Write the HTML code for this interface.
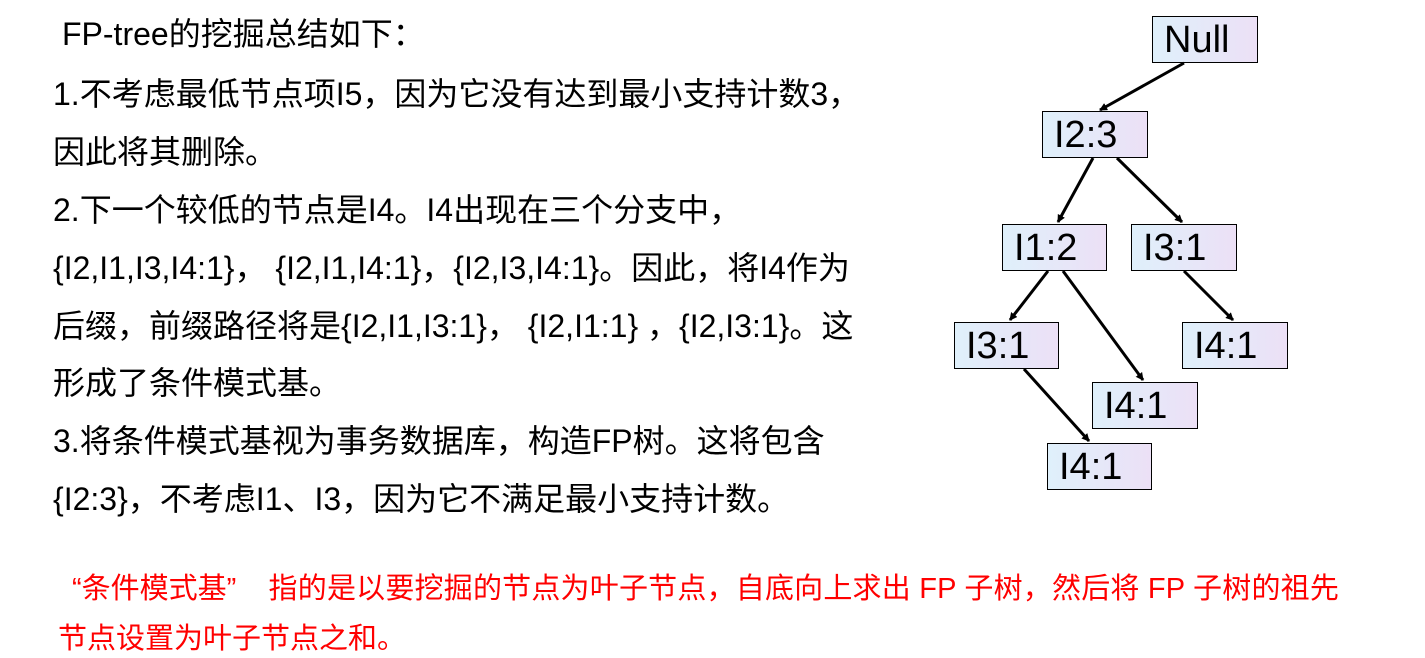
<!DOCTYPE html>
<html><head><meta charset="utf-8"><style>
body{margin:0;width:1425px;height:658px;background:#fff;position:relative;overflow:hidden;font-family:"Liberation Sans","Noto Sans CJK SC",sans-serif}
.l{position:absolute;left:53px;font-size:32px;color:#000;white-space:nowrap;line-height:38px}
.r{position:absolute;left:58px;font-size:29px;color:#f00;white-space:nowrap;line-height:34px}
.b{position:absolute;box-sizing:border-box;border:1.5px solid #000;background:linear-gradient(90deg,#dff0fb,#ece0f6);font-size:38px;line-height:46px;padding-left:11px;height:47px}
</style></head><body>
<div class="l" style="top:15px;left:62px">FP-tree的挖掘总结如下：</div>
<div class="l" style="top:75px">1.不考虑最低节点项I5，因为它没有达到最小支持计数3，</div>
<div class="l" style="top:133px">因此将其删除。</div>
<div class="l" style="top:191px">2.下一个较低的节点是I4。I4出现在三个分支中，</div>
<div class="l" style="top:249px">{I2,I1,I3,I4:1}， {I2,I1,I4:1}，{I2,I3,I4:1}。因此，将I4作为</div>
<div class="l" style="top:307px">后缀，前缀路径将是{I2,I1,I3:1}， {I2,I1:1} ，{I2,I3:1}。这</div>
<div class="l" style="top:364px">形成了条件模式基。</div>
<div class="l" style="top:422px">3.将条件模式基视为事务数据库，构造FP树。这将包含</div>
<div class="l" style="top:480px">{I2:3}，不考虑I1、I3，因为它不满足最小支持计数。</div>
<div class="r" style="top:572px;left:72px">“条件模式基”&nbsp;&nbsp;&nbsp;&nbsp;<span style="letter-spacing:0.2px">指的是以要挖掘的节点为叶子节点，自底向上求出 FP 子树，然后将 FP 子树的祖先</span></div>
<div class="r" style="top:622px">节点设置为叶子节点之和。</div>

<div class="b" style="left:1152px;top:16px;width:106px">Null</div>
<div class="b" style="left:1042px;top:111px;width:106px">I2:3</div>
<div class="b" style="left:1002px;top:224px;width:105px">I1:2</div>
<div class="b" style="left:1131px;top:224px;width:106px">I3:1</div>
<div class="b" style="left:954px;top:322px;width:105px">I3:1</div>
<div class="b" style="left:1182px;top:322px;width:106px">I4:1</div>
<div class="b" style="left:1092px;top:382px;width:106px">I4:1</div>
<div class="b" style="left:1047px;top:443px;width:105px">I4:1</div>

<svg width="1425" height="658" style="position:absolute;left:0;top:0">
<defs><marker id="a" markerWidth="8" markerHeight="8" refX="7" refY="4" orient="auto" markerUnits="userSpaceOnUse"><path d="M0,0 L8,4 L0,8 z" fill="#000"/></marker></defs>
<g stroke="#000" stroke-width="3" marker-end="url(#a)">
<line x1="1184" y1="63" x2="1100" y2="110"/>
<line x1="1093" y1="158" x2="1058" y2="222"/>
<line x1="1117" y1="158" x2="1182" y2="222"/>
<line x1="1048" y1="271" x2="1010" y2="320"/>
<line x1="1063" y1="271" x2="1143" y2="380"/>
<line x1="1184" y1="271" x2="1233" y2="320"/>
<line x1="1024" y1="369" x2="1089" y2="441"/>
</g></svg>
</body></html>
